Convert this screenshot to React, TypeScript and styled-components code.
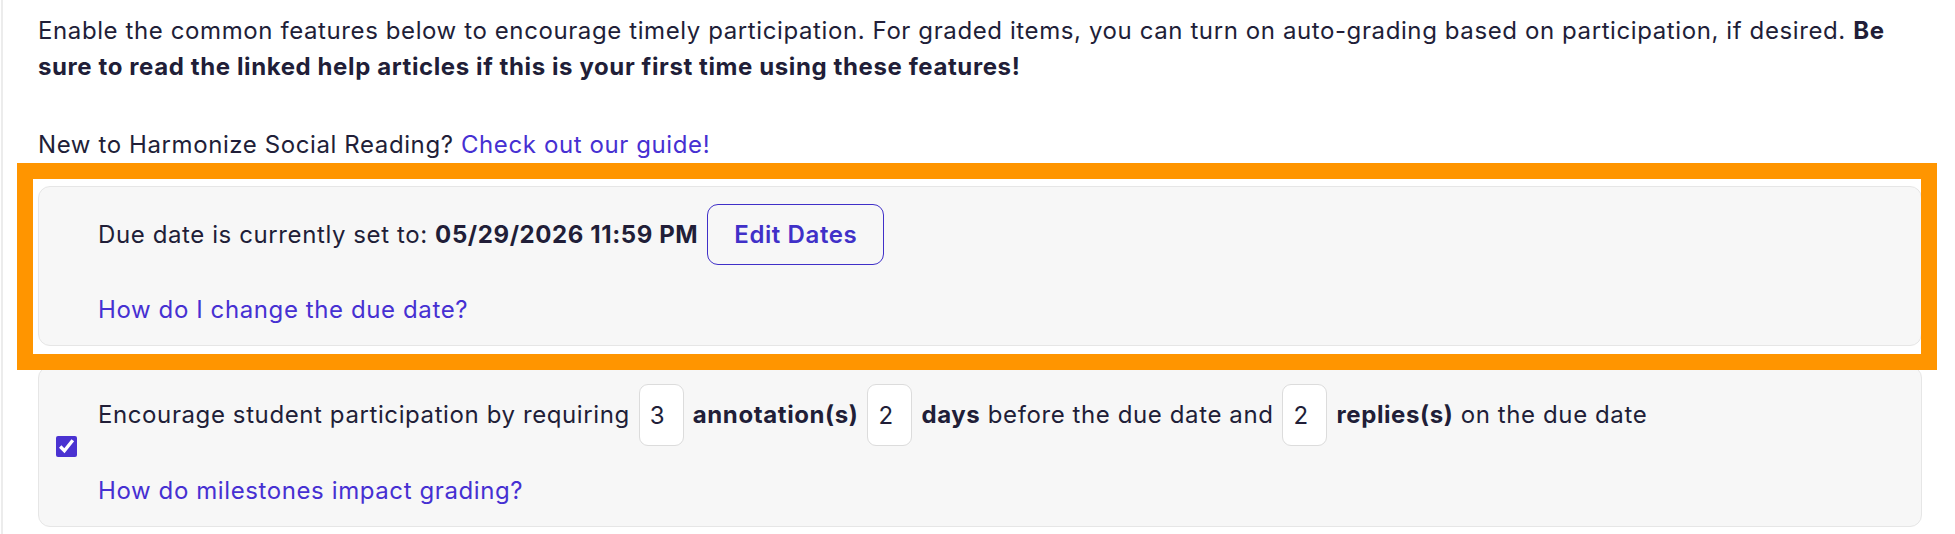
import React from "react";
import styled, { createGlobalStyle } from "styled-components";

const Global = createGlobalStyle`
  html, body { margin: 0; padding: 0; background: #ffffff; }
  body {
    font-family: Inter, "Noto Sans", "Liberation Sans", sans-serif;
    color: #211e38;
    font-size: 24px;
    line-height: 36px;
    letter-spacing: 0.6px;
  }
  * { box-sizing: border-box; }
`;

const Page = styled.div`
  margin-left: 1px;
  border-left: 2px solid #ececec;
  min-height: 534px;
  padding: 13px 33px 0 35px;
`;

const Para = styled.p<{ $gap?: number }>`
  margin: ${(p) => p.$gap ?? 0}px 0 0 0;
  font-size: 24px;
  line-height: 36px;
`;

const Link = styled.a`
  color: #4630d2;
  text-decoration: none;
  cursor: pointer;
`;

const Highlight = styled.div`
  position: relative;
  margin-top: 23px;
`;

const Spotlight = styled.div`
  position: absolute;
  top: -23px;
  left: -21px;
  right: -15px;
  bottom: -24px;
  border: 16px solid #ff9500;
  pointer-events: none;
  z-index: 2;
`;

const Card = styled.div<{ $gap?: number }>`
  margin-top: ${(p) => p.$gap ?? 0}px;
  background: #f7f7f7;
  border: 1px solid #e6e6e6;
  border-radius: 12px;
  padding: 17px 17px;
  display: flex;
  align-items: center;
  gap: 21px;
`;

const CheckSlot = styled.div`
  width: 21px;
  flex: 0 0 21px;
  display: flex;
  align-items: center;
  justify-content: center;
`;

const Check = styled.input`
  width: 21px;
  height: 21px;
  margin: 0;
  accent-color: #4a32d1;
`;

const Body = styled.div`
  display: flex;
  flex-direction: column;
  gap: 27px;
`;

const Row = styled.div`
  display: flex;
  align-items: center;
  gap: 9px;
  white-space: nowrap;
`;

const Text = styled.span<{ $bold?: boolean }>`
  font-weight: ${(p) => (p.$bold ? 700 : 400)};
`;

const EditButton = styled.button`
  height: 61px;
  padding: 0 26px;
  border: 1px solid #4030c8;
  border-radius: 11px;
  background: transparent;
  color: #4030c8;
  font-family: Inter, "Noto Sans", "Liberation Sans", sans-serif;
  font-size: 24px;
  letter-spacing: 0.6px;
  font-weight: 600;
  cursor: pointer;
`;

const NumberBox = styled.input`
  width: 45px;
  height: 62px;
  padding: 0 10px;
  border: 1px solid #dcdcdc;
  border-radius: 9px;
  background: #ffffff;
  color: #211e38;
  font-family: Inter, "Noto Sans", "Liberation Sans", sans-serif;
  font-size: 24px;
  letter-spacing: 0.6px;
  outline: none;
`;

export default function App() {
  return (
    <>
      <Global />
      <Page>
        <Para>
          Enable the common features below to encourage timely participation. For graded items, you can turn on
          auto-grading based on participation, if desired.{" "}
          <b>Be sure to read the linked help articles if this is your first time using these features!</b>
        </Para>
        <Para $gap={42}>
          New to Harmonize Social Reading? <Link>Check out our guide!</Link>
        </Para>
        <Highlight>
          <Spotlight />
          <Card>
            <CheckSlot />
            <Body>
              <Row>
                <Text>
                  Due date is currently set to: <b>05/29/2026 11:59 PM</b>
                </Text>
                <EditButton>Edit Dates</EditButton>
              </Row>
              <Link>How do I change the due date?</Link>
            </Body>
          </Card>
        </Highlight>
        <Card $gap={20}>
          <CheckSlot>
            <Check type="checkbox" defaultChecked />
          </CheckSlot>
          <Body>
            <Row>
              <Text>Encourage student participation by requiring</Text>
              <NumberBox defaultValue="3" />
              <Text $bold>annotation(s)</Text>
              <NumberBox defaultValue="2" />
              <Text>
                <b>days</b> before the due date and
              </Text>
              <NumberBox defaultValue="2" />
              <Text>
                <b>replies(s)</b> on the due date
              </Text>
            </Row>
            <Link>How do milestones impact grading?</Link>
          </Body>
        </Card>
      </Page>
    </>
  );
}
